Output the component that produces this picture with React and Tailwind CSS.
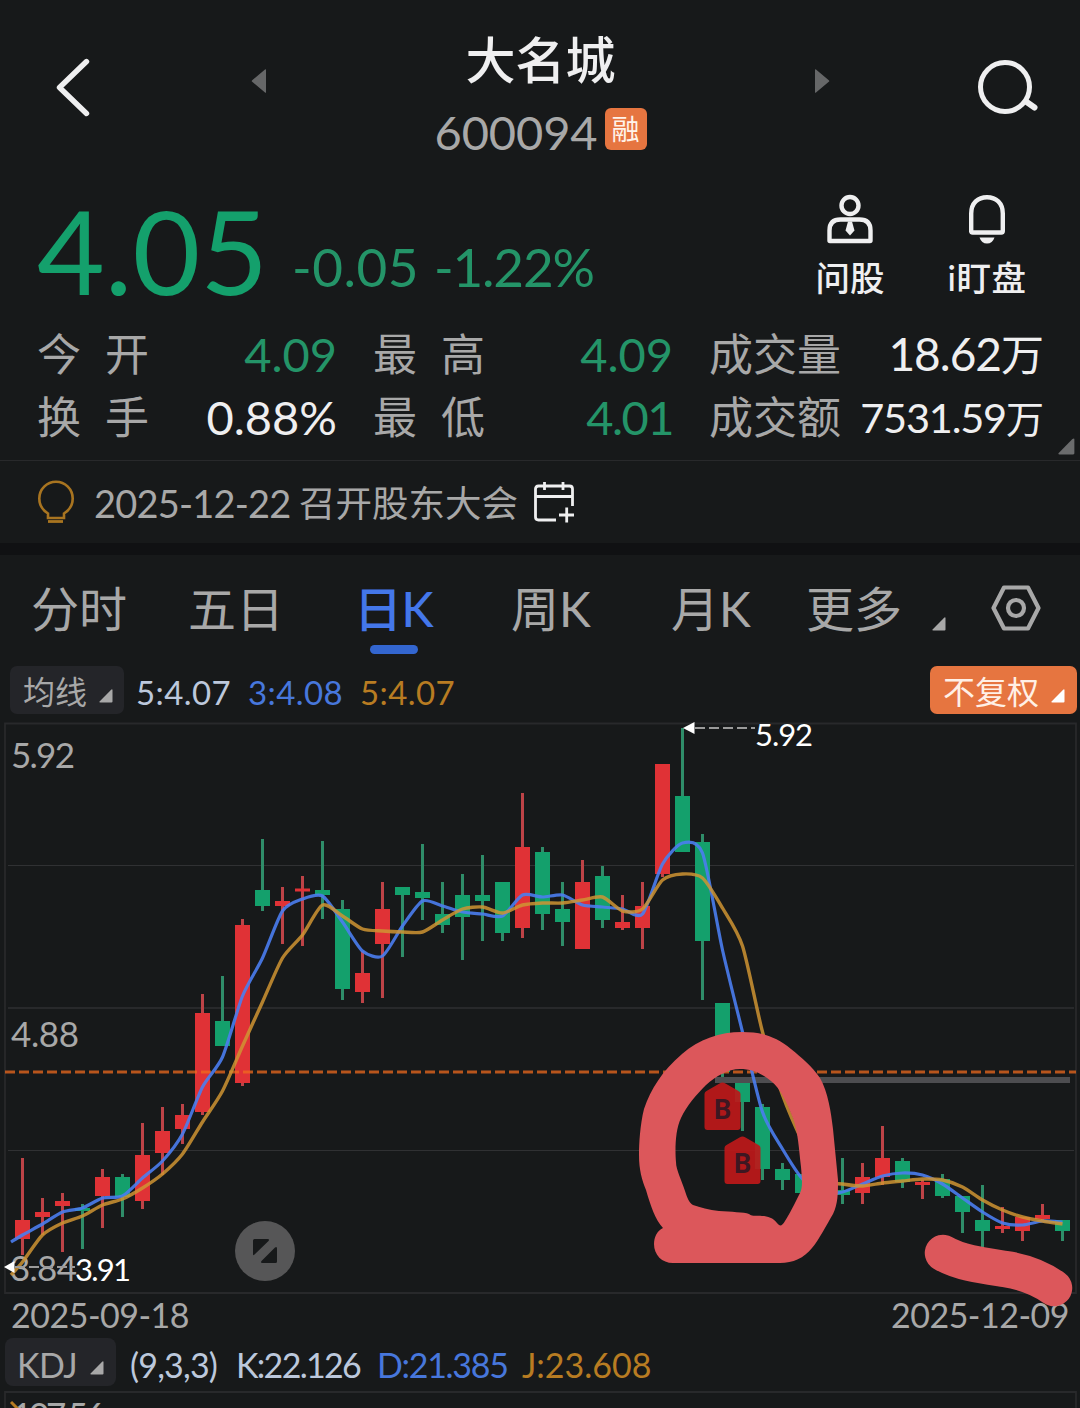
const UP = '#e03236';
const DOWN = '#14a06c';
const UP_WICK = '#bd4347';
const DOWN_WICK = '#2f8d69';

// [direction, wick top, wick bottom, body top, body bottom]
const candles = [
  ['u', 1158, 1255, 1220, 1239],
  ['u', 1198, 1235, 1212, 1217],
  ['u', 1193, 1252, 1201, 1206],
  ['d', 1204, 1249, 1208, 1211],
  ['u', 1169, 1228, 1177, 1196],
  ['d', 1174, 1217, 1177, 1197],
  ['u', 1123, 1209, 1155, 1201],
  ['u', 1107, 1175, 1131, 1153],
  ['u', 1104, 1144, 1115, 1129],
  ['u', 994, 1115, 1013, 1112],
  ['d', 976, 1046, 1021, 1046],
  ['u', 919, 1086, 925, 1083],
  ['d', 839, 911, 890, 906],
  ['u', 887, 944, 901, 906],
  ['u', 876, 946, 888.5, 891.5],
  ['d', 841, 919, 890, 895],
  ['d', 900, 1000, 909, 989],
  ['u', 951, 1003, 973, 992],
  ['u', 882, 998, 909, 944],
  ['d', 887, 957, 887, 895],
  ['d', 844, 920, 892, 898],
  ['d', 882, 933, 914, 925],
  ['d', 874, 960, 895, 917],
  ['d', 855, 941, 895, 901],
  ['d', 882, 941, 882, 933],
  ['u', 793, 938, 847, 928],
  ['d', 847, 930, 852, 914],
  ['d', 882, 946, 909, 922],
  ['u', 860, 949, 882, 949],
  ['d', 866, 928, 876, 920],
  ['u', 895, 930, 922, 928],
  ['u', 882, 949, 906, 928],
  ['u', 764, 877, 764, 874],
  ['d', 728, 852, 796, 852],
  ['d', 834, 1000, 842, 941],
  ['d', 1003, 1077, 1003, 1072],
  ['d', 1083, 1131, 1083, 1102],
  ['d', 1104, 1180, 1107, 1169],
  ['d', 1163, 1190, 1169, 1180],
  ['d', 1174, 1193, 1174, 1193],
  ['d', 1180, 1200, 1186, 1192],
  ['d', 1158, 1204, 1190, 1195],
  ['u', 1163, 1204, 1177, 1193],
  ['u', 1126, 1185, 1158, 1177],
  ['d', 1158, 1188, 1161, 1182],
  ['u', 1180, 1199, 1182, 1185],
  ['d', 1174, 1198, 1179, 1196],
  ['d', 1196, 1233, 1196, 1212],
  ['d', 1185, 1247, 1220, 1231],
  ['u', 1207, 1233, 1226, 1229],
  ['u', 1217, 1241, 1217, 1231],
  ['u', 1204, 1220, 1215, 1219],
  ['d', 1220, 1241, 1220, 1231],
];

// one value per candle, the first one sits on the left edge of the plot
const ma3 = [
  1242, 1235, 1224, 1212, 1208, 1198, 1196, 1178, 1161, 1134, 1087, 1057, 996, 958, 911, 899, 896, 922,
  951, 956, 926, 901, 906, 912, 914, 916, 895, 897, 895, 905, 907, 909, 914, 864, 843, 853, 950, 1032,
  1112, 1149, 1179, 1193, 1192, 1184, 1176, 1173, 1175, 1184, 1198, 1212, 1223, 1225, 1221, 1222,
];
const ma5 = [
  1275, 1262, 1235, 1223, 1216, 1205, 1199, 1188, 1174, 1154, 1122, 1091, 1046, 1002, 958, 935, 905, 916,
  929, 931, 932, 932, 920, 909, 907, 913, 905, 903, 903, 900, 897, 911, 909, 880, 874, 878, 908, 946,
  1032, 1095, 1142, 1180, 1184, 1186, 1183, 1181, 1179, 1180, 1187, 1200, 1210, 1217, 1221, 1224,
];

const toPoints = (values) => values.map((y, i) => [i === 0 ? 11 : 22.5 + (i - 1) * 20, y]);

function smooth(values, k = 0.12) {
  const p = toPoints(values);
  let d = `M${p[0][0]} ${p[0][1]}`;
  for (let i = 0; i < p.length - 1; i++) {
    const a = p[i - 1] || p[i];
    const b = p[i];
    const c = p[i + 1];
    const e = p[i + 2] || c;
    d += ` C${b[0] + (c[0] - a[0]) * k} ${b[1] + (c[1] - a[1]) * k} ${c[0] - (e[0] - b[0]) * k} ${c[1] - (e[1] - b[1]) * k} ${c[0]} ${c[1]}`;
  }
  return d;
}

function Corner({ className }) {
  return (
    <svg viewBox="0 0 14 14" className={`shrink-0 ${className}`} fill="currentColor">
      <path d="M13.500 1.500V12.600Q13.500 13.500 12.500 13.500H1.300Q-.3 13.500.6 12.400L11.900.9Q13.500-.5 13.500 1.500z" />
    </svg>
  );
}

function Header() {
  return (
    <header className="flex h-[182px] items-start justify-between">
      <svg viewBox="0 0 36 60" className="ml-[55px] mt-[58px] h-[60px] w-9" fill="none" stroke="#efeff0" strokeWidth="5.400" strokeLinecap="round" strokeLinejoin="round">
        <path d="M31.500 3.500 4.500 29.500 31.500 55.500" />
      </svg>
      <svg viewBox="0 0 16 24" className="ml-[159px] mt-[69px] h-6 w-4" fill="#666768">
        <path d="M15 .8v22.400q0 1-1 .3L1.200 12.800q-1-.8 0-1.600L14 .5q1-.7 1 .3z" />
      </svg>
      <div className="ml-[167px] w-[213px]">
        <h1 className="mt-[35px] w-[212px] text-center text-[50px] font-medium leading-[50px] text-[#efeff0]">大名城</h1>
        <div className="mt-[20px] flex items-start">
          <span className="mt-[3px] w-[170px] text-[47px] leading-[48px] tracking-[-0.100px] text-[#a8a8a8]">600094</span>
          <span className="mt-[3px] flex h-[42px] w-[42px] items-center justify-center rounded-[6px] bg-[#e67540] text-[28px] leading-none text-[#fff3ea]">融</span>
        </div>
      </div>
      <svg viewBox="0 0 16 24" className="ml-[166px] mt-[69px] h-6 w-4" fill="#666768">
        <path d="M1 .8v22.400q0 1 1 .3l12.800-10.700q1-.8 0-1.600L2 .5q-1-.7-1 .3z" />
      </svg>
      <svg viewBox="0 0 64 60" className="ml-[145px] mr-[40px] mt-[58px] h-[60px] w-16" fill="none" stroke="#efeff0" strokeWidth="5">
        <circle cx="29" cy="29" r="24.500" />
        <path d="M50 43.500 58.500 49.500" strokeWidth="6" strokeLinecap="round" />
      </svg>
    </header>
  );
}

function Quote() {
  return (
    <section className="flex h-[144px] items-start">
      <div className="ml-[37px] flex items-start">
        <span className="w-[255px] text-[117px] leading-[136px] text-[#14a06c]">4.05</span>
        <span className="mt-[58px] w-[142px] text-[53px] leading-none tracking-[0.500px] text-[#249468]">-0.05</span>
        <span className="mt-[58px] w-[170px] text-[53px] leading-none tracking-[-1.200px] text-[#249468]">-1.22%</span>
      </div>
      <div className="ml-auto mt-[12px] flex w-[264px] text-[34.500px] leading-[36px] text-[#efeff0]">
        <div className="flex w-[68px] flex-col items-center">
          <svg viewBox="0 0 48 50" className="h-[50px] w-12" fill="none" stroke="#efeff0" strokeWidth="4.400">
            <circle cx="24" cy="11.500" r="8.500" />
            <path d="M3.500 46.500V36.500q0-11 11-11h19q11 0 11 11v10q0 .5-.5.500H4q-.5 0-.5-.5z" strokeLinejoin="round" />
            <path d="M22 27.500h4l2.500 9-4.500 5-4.500-5z" fill="#efeff0" stroke="none" />
          </svg>
          <span className="mt-[16px] whitespace-nowrap font-medium">问股</span>
        </div>
        <div className="ml-[63px] flex w-[80px] flex-col items-center">
          <svg viewBox="0 0 48 50" className="h-[50px] w-12" fill="none" stroke="#efeff0" strokeWidth="4.400">
            <path d="M8.200 38V19.500C8.200 9 15 3.200 24 3.200S39.800 9 39.800 19.500V37q0 1.500-1.500 1.500H9.700q-1.500 0-1.500-1.500z" />
            <path d="M16.500 43.500h15q-2 6-7.500 6t-7.500-6z" fill="#efeff0" stroke="none" />
          </svg>
          <span className="mt-[16px] whitespace-nowrap font-medium tracking-[0.600px]">i盯盘</span>
        </div>
      </div>
    </section>
  );
}

function Stats() {
  return (
    <section className="relative flow-root h-[135px] border-b border-[#28292b] pl-[37px] pr-[37px] text-[44px] leading-[62px] text-[#a8a8a8]">
      <div className="-mt-[3px] grid h-[124px] grid-cols-[112px_188px_36px_112px_188px_36px_132px_203px]">
        <span className="flex justify-between"><i className="not-italic">今</i><i className="not-italic">开</i></span>
        <span className="text-right text-[47px] text-[#249468]">4.09</span>
        <span />
        <span className="flex justify-between"><i className="not-italic">最</i><i className="not-italic">高</i></span>
        <span className="text-right text-[47px] text-[#249468]">4.09</span>
        <span />
        <span className="whitespace-nowrap">成交量</span>
        <span className="whitespace-nowrap text-right text-[46px] tracking-[-1px] text-[#efeff0]">18.62<b className="text-[43px] font-normal tracking-normal">万</b></span>
        <span className="flex justify-between"><i className="not-italic">换</i><i className="not-italic">手</i></span>
        <span className="text-right text-[47px] text-[#efeff0]">0.88%</span>
        <span />
        <span className="flex justify-between"><i className="not-italic">最</i><i className="not-italic">低</i></span>
        <span className="text-right text-[47px] tracking-[-1.500px] text-[#249468]">4.01</span>
        <span />
        <span className="whitespace-nowrap">成交额</span>
        <span className="whitespace-nowrap text-right text-[41.500px] tracking-[-1.200px] text-[#efeff0]">7531.59<b className="text-[38px] font-normal tracking-normal">万</b></span>
      </div>
      <Corner className="absolute bottom-[5px] right-[5px] h-[17px] w-[17px] text-[#6b6c6d]" />
    </section>
  );
}

function Notice() {
  return (
    <section className="flex h-[94px] items-start border-b-[12px] border-[#101113] text-[#a8a8a8]">
      <svg viewBox="0 0 38 44" className="ml-[37px] mt-[19px] h-11 w-[38px]" fill="none" stroke="#a87420" strokeWidth="2.600">
        <path d="M11 38v-4.500C5.500 30 2.300 24.500 2.300 18.500a16.700 16.700 0 0 1 33.400 0c0 6-3.200 11.500-8.700 15V38z" />
        <path d="M11 41.500h15" strokeWidth="2.800" />
      </svg>
      <span className="ml-[19px] mt-[22px] w-[205px] text-[38px] leading-[40px] tracking-[-0.800px]">2025-12-22</span>
      <span className="mt-[22px] w-[234px] whitespace-nowrap text-[36.500px] leading-[40px]">召开股东大会</span>
      <svg viewBox="0 0 42 42" className="mt-[20px] h-[42px] w-[42px]" fill="none" stroke="#efeff0" strokeWidth="2.800">
        <path d="M39.500 25V8q0-3-3-3h-31q-3 0-3 3v28q0 3 3 3H23M2.500 15.500h37M11.500 1v8M30 1v8M26 34h15M33.700 26.500v15" />
      </svg>
    </section>
  );
}

const tabs = [
  { label: '分时', box: 'w-[157px]' },
  { label: '五日', box: 'w-[166px]' },
  { label: '日K', box: 'w-[157px]', active: true },
  { label: '周K', box: 'w-[160px]' },
  { label: '月K', box: 'w-[135px]' },
  { label: '更多', box: 'w-[126px]' },
];

function Tabs() {
  return (
    <nav className="flex h-[111px] items-start pl-[31px] text-[48px] leading-[52px] text-[#a8a8a8]">
      {tabs.map((t) => (
        <div key={t.label} className={`${t.box} shrink-0 pt-[28px]`}>
          <span className={`relative whitespace-nowrap ${t.active ? 'font-medium tracking-[-0.500px] text-[#4477ea]' : ''}`}>
            {t.label}
            {t.active && <span className="absolute -bottom-[17px] left-[16px] h-[9px] w-[48px] rounded-full bg-[#3366d0]" />}
          </span>
        </div>
      ))}
      <Corner className="mt-[62px] h-[14px] w-[14px]" />
      <svg viewBox="0 0 52 48" className="ml-[44px] mt-[29px] h-12 w-[52px] shrink-0" fill="none" stroke="#a8a8a8" strokeWidth="4.200" strokeLinejoin="round">
        <path d="M14 3.500h24L48.500 24 38 44.500H14L3.500 24z" />
        <circle cx="26" cy="24" r="8" />
      </svg>
    </nav>
  );
}

function Averages() {
  return (
    <section className="flex h-[48px] items-center text-[33px] leading-none tracking-[0.400px]">
      <div className="ml-[10px] flex h-[48px] w-[114px] items-center rounded-[7px] bg-[#242529] pl-[13px] text-[32px] tracking-normal text-[#a8a8a8]">
        <span className="mt-[3px]">均线</span>
        <Corner className="ml-[12px] mt-[11px] h-[14px] w-[14px]" />
      </div>
      <span className="ml-[12px] mt-[5px] w-[112px] text-[#bcc8dc]">5:4.07</span>
      <span className="mt-[5px] w-[112px] text-[#4777dc]">3:4.08</span>
      <span className="mt-[5px] text-[#b87c22]">5:4.07</span>
      <div className="ml-auto mr-[3px] flex h-[48px] w-[147px] items-center rounded-[7px] bg-[#e67540] pl-[13px] text-[32px] tracking-normal text-[#fff0e6]">
        <span className="mt-[3px] whitespace-nowrap">不复权</span>
        <Corner className="ml-[12px] mt-[11px] h-[14px] w-[14px] text-white" />
      </div>
    </section>
  );
}

function BuyMark({ x, y }) {
  return (
    <g>
      <path
        d={`M${x - 16} ${y + 9}L${x - 3} ${y + 1.5}Q${x} ${y - 0.5} ${x + 3} ${y + 1.5}L${x + 16} ${y + 9}Q${x + 18} ${y + 10} ${x + 18} ${y + 12}V${y + 45}Q${x + 18} ${y + 48} ${x + 15} ${y + 48}H${x - 15}Q${x - 18} ${y + 48} ${x - 18} ${y + 45}V${y + 12}Q${x - 18} ${y + 10} ${x - 16} ${y + 9}z`}
        fill="#bc191a"
        fillOpacity="0.930"
      />
      <text x={x} y={y + 36.5} textAnchor="middle" fontSize="27" fontWeight="700" fill="#3d1722" className="font-['Roboto']">B</text>
    </g>
  );
}

function KLineChart() {
  return (
    <svg viewBox="0 714 1080 582" className="relative z-10 block h-[582px] w-[1080px] overflow-visible">
      <g stroke="#303133" strokeWidth="1">
        <path d="M8 865.500H1074M8 1150.500H1074" />
        <path d="M8 1008H1074" stroke="#28292b" strokeWidth="2" />
      </g>
      <path d="M5 1293V723.500H1076V1293z" fill="none" stroke="#28292b" strokeWidth="1.800" />
      <g fontSize="35" fill="#a8a8a8">
        <text x="11" y="767.500" textLength="64">5.92</text>
        <text x="11" y="1046.500" textLength="68">4.88</text>
        <text x="10" y="1280.500" textLength="67">3.84</text>
      </g>
      {candles.map(([dir, high, low, top, bottom], i) => (
        <g key={i}>
          <rect x={21 + i * 20} y={high} width="3" height={low - high} fill={dir === 'u' ? UP_WICK : DOWN_WICK} />
          <rect x={15 + i * 20} y={top} width="15" height={bottom - top} fill={dir === 'u' ? UP : DOWN} />
        </g>
      ))}
      <path d="M5 1072H1076" stroke="#f06a1e" strokeOpacity="0.740" strokeWidth="3" strokeDasharray="10 4" />
      <path d="M715 1080H1070" stroke="#4d4d50" strokeWidth="6" />
      <path d={smooth(ma3)} fill="none" stroke="#4a7df0" strokeOpacity="0.900" strokeWidth="3.200" />
      <path d={smooth(ma5)} fill="none" stroke="#cf9433" strokeOpacity="0.850" strokeWidth="3.400" />
      <BuyMark x={722.5} y={1082} />
      <BuyMark x={742.5} y={1136} />

      <path d="M683 728 694.500 722V734z" fill="#fff" />
      <path d="M695 728H755" stroke="#9a9a9a" strokeWidth="1.800" strokeDasharray="10 4" />
      <text x="755" y="746" fontSize="31" fill="#fff" textLength="58">5.92</text>
      <path d="M4 1267 14.500 1261V1273z" fill="#fff" />
      <path d="M15 1267H75" stroke="#9a9a9a" strokeWidth="1.800" strokeDasharray="10 4" />
      <text x="75" y="1281" fontSize="31" fill="#fff" textLength="56">3.91</text>

      <circle cx="265" cy="1251" r="30" fill="#565657" />
      <path d="M254.500 1239H267.500Q270 1239 268.500 1241L254.500 1254.500Q253 1256 253 1254V1240.500Q253 1239 254.500 1239zM277 1248.500V1261.500Q277 1263 275.500 1263H262.500Q260 1263 261.500 1261L275 1247.500Q277 1246 277 1248.500z" fill="#17191a" />

      <g fill="#dc575b">
        <path
          fillRule="evenodd"
          d="M742 1032C720 1032 699 1039 682 1054C662 1071 651 1089 644 1109C640 1125 639 1144 639 1155C639 1170 642 1180 646 1190C651 1207 655 1219 663 1228C657 1231 654 1237 654 1244C654 1255 662 1263 673 1263H780C793 1263 804 1258 812 1248C819 1240 827 1224 833 1214C838 1204 838 1193 838 1180L833 1129C831 1112 828 1092 820 1078C812 1066 802 1058 791 1049C775 1036 761 1032 742 1032zM740 1069C752 1069 763 1074 771 1081C781 1089 787 1103 793 1118C798 1131 799 1150 801 1167C802 1179 803 1187 800 1193C795 1203 789 1215 785 1221C782 1226 780 1227 777 1223C773 1218 768 1216 762 1216C757 1215 753 1217 749 1214C744 1212 731 1212 719 1211C709 1210 700 1207 693 1205C689 1203 687 1197 685 1191C682 1181 676 1170 676 1162C675 1151 675 1130 681 1118C687 1105 697 1094 706 1085C716 1076 728 1069 740 1069z"
        />
        <path d="M943 1253C960 1263 985 1266 1005 1269C1025 1272 1043 1280 1054 1288" fill="none" stroke="#dc575b" strokeWidth="36.500" strokeLinecap="round" />
      </g>
    </svg>
  );
}

export default function App() {
  return (
    <main className="h-[1408px] w-[1080px] overflow-hidden bg-[#17191a] font-['Lato','Noto_Sans_CJK_SC',sans-serif]">
      <Header />
      <Quote />
      <Stats />
      <Notice />
      <Tabs />
      <Averages />
      <KLineChart />
      <div className="flex h-[42px] items-start justify-between pl-[11px] pr-[11px] pt-[2px] text-[34px] leading-none tracking-[-0.500px] text-[#a8a8a8]">
        <span>2025-09-18</span>
        <span>2025-12-09</span>
      </div>
      <section className="flex h-[48px] items-center text-[34px] leading-none">
        <div className="ml-[5px] flex h-[48px] w-[111px] items-center rounded-[8px] bg-[#242529] pl-[12px] text-[#a8a8a8]">
          <span className="mt-[5px] w-[73px] tracking-[-0.500px]">KDJ</span>
          <Corner className="mt-[11px] h-[14px] w-[14px]" />
        </div>
        <span className="ml-[14px] mt-[5px] w-[106px] tracking-[-0.800px] text-[#bcc8dc]">(9,3,3)</span>
        <span className="mt-[5px] w-[141px] tracking-[-1.700px] text-[#bcc8dc]">K:22.126</span>
        <span className="mt-[5px] w-[145px] tracking-[-1.300px] text-[#4777dc]">D:21.385</span>
        <span className="mt-[5px] text-[#b87c22]">J:23.608</span>
      </section>
      <svg viewBox="0 1386 1080 22" className="block h-[22px] w-[1080px]">
        <path d="M5 1410V1392H1076V1410" fill="none" stroke="#28292b" strokeWidth="1.800" />
        <text x="12" y="1428" fontSize="35" fill="#a8a8a8" textLength="93">107.56</text>
        <path d="M11 1402 18 1409" stroke="#b87c22" strokeWidth="3" />
      </svg>
    </main>
  );
}
